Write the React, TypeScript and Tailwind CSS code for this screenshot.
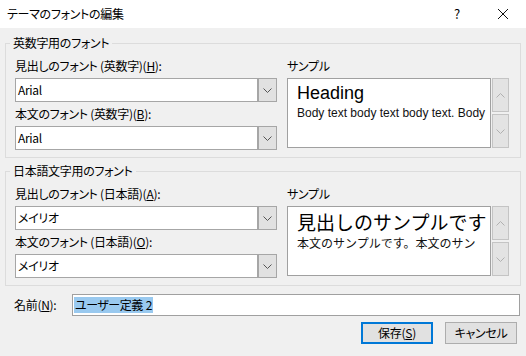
import React from "react";

const jp = "font-['Noto_Sans_CJK_JP','Noto_Sans',sans-serif]";

function Chevron({ up = false, color = "#555555" }: { up?: boolean; color?: string }) {
  return (
    <svg width="9" height="5" viewBox="0 0 9 5" fill="none">
      <polyline
        points={up ? "0.5,4.5 4.5,0.5 8.5,4.5" : "0.5,0.5 4.5,4.5 8.5,0.5"}
        stroke={color}
        strokeWidth="1"
      />
    </svg>
  );
}

function Combo({ value }: { value: string }) {
  return (
    <div className="flex h-[24px] border border-[#a6a6a6] bg-white">
      <div className="flex flex-1 items-center pl-[2px] text-[12px] text-black">{value}</div>
      <div className="flex w-[19px] items-center justify-center border-l-2 border-[#a6a6a6] bg-[#e1e1e1]">
        <Chevron />
      </div>
    </div>
  );
}

function Label({ text, accel, tail }: { text: string; accel: string; tail: string }) {
  return (
    <div className="mb-[4px] h-[16px] text-[12px] leading-[16px] text-black">
      {text}(<span className="underline">{accel}</span>){tail}
    </div>
  );
}

function ScrollButtons() {
  return (
    <div className="flex w-[17px] flex-col gap-[2px]">
      <div className="flex h-[34px] items-center justify-center border border-[#c4c4c4] bg-[#e3e3e3]">
        <Chevron up color="#b0b0b0" />
      </div>
      <div className="flex h-[34px] items-center justify-center border border-[#c4c4c4] bg-[#e3e3e3]">
        <Chevron color="#b0b0b0" />
      </div>
    </div>
  );
}

function Group({
  title,
  labels,
  combos,
  sample,
}: {
  title: string;
  labels: [string, string, string][];
  combos: string[];
  sample: React.ReactNode;
}) {
  return (
    <fieldset className="mx-[5px] min-w-0 border border-[#dcdcdc] p-0">
      <legend className="ml-[4px] px-[3px] text-[12px] leading-[16px] text-black">{title}</legend>
      <div className="flex gap-[10px] pb-[7px] pl-[9px] pr-[10px] pt-[7px]">
        <div className="flex w-[262px] flex-col">
          <Label text={labels[0][0]} accel={labels[0][1]} tail={labels[0][2]} />
          <Combo value={combos[0]} />
          <div className="mt-[4px]">
            <Label text={labels[1][0]} accel={labels[1][1]} tail={labels[1][2]} />
          </div>
          <Combo value={combos[1]} />
        </div>
        <div className="flex flex-col">
          <div className="mb-[4px] h-[16px] text-[12px] leading-[16px] text-black">サンプル</div>
          <div className="flex gap-[1px]">
            <div className="h-[70px] w-[204px] overflow-hidden whitespace-nowrap border border-[#a0a0a0] bg-white pl-[9px]">
              {sample}
            </div>
            <ScrollButtons />
          </div>
        </div>
      </div>
    </fieldset>
  );
}

export default function App() {
  return (
    <div className={`flex h-[356px] w-[526px] flex-col bg-[#f0f0f0] ${jp} [font-feature-settings:'palt'] tracking-[-0.3px]`}>
      {/* title bar */}
      <div className="flex h-[28px] shrink-0 items-center bg-white">
        <span className="flex-1 pl-[7px] text-[12px] text-black">テーマのフォントの編集</span>
        <div className="flex h-full w-[46px] items-center justify-center text-[13px] text-black">?</div>
        <div className="flex h-full w-[46px] items-center justify-center">
          <svg width="10" height="10" viewBox="0 0 10 10">
            <path d="M0 0 L10 10 M10 0 L0 10" stroke="#111" strokeWidth="1" />
          </svg>
        </div>
      </div>

      <div className="flex flex-col pt-[7px]">
        <Group
          title="英数字用のフォント"
          labels={[
            ["見出しのフォント (英数字)", "H", ":"],
            ["本文のフォント (英数字)", "B", ":"],
          ]}
          combos={["Arial", "Arial"]}
          sample={
            <div className="font-['Liberation_Sans',Arial,sans-serif] tracking-normal [font-feature-settings:normal]">
              <div className="pt-[4px] text-[18px] leading-[20px] text-black">Heading</div>
              <div className="mt-[3px] text-[12px] leading-[14px] text-[#111]">Body text body text body text. Body</div>
            </div>
          }
        />
        <div className="mt-[5px]">
          <Group
            title="日本語文字用のフォント"
            labels={[
              ["見出しのフォント (日本語)", "A", ":"],
              ["本文のフォント (日本語)", "O", ":"],
            ]}
            combos={["メイリオ", "メイリオ"]}
            sample={
              <div className="tracking-normal [font-feature-settings:normal]">
                <div className="pt-[3px] text-[19px] leading-[24px] text-black">見出しのサンプルです</div>
                <div className="mt-[2px] text-[12px] leading-[14px] text-[#111]">本文のサンプルです。本文のサン</div>
              </div>
            }
          />
        </div>

        {/* name row */}
        <div className="mt-[8px] flex items-center pl-[14px] pr-[6px]">
          <div className="w-[58px] text-[12px] text-black">
            名前(<span className="underline">N</span>):
          </div>
          <div className="flex h-[22px] flex-1 items-center border border-[#a0a0a0] bg-white pl-[1px]">
            <span className="whitespace-pre bg-[#99c9ef] px-[1px] text-[12px] leading-[16px] tracking-[-0.5px] text-black">
              ユーザー定義<span className="ml-[3px]">2</span>
            </span>
          </div>
        </div>

        {/* buttons */}
        <div className="mt-[6px] flex justify-end gap-[12px] pr-[9px]">
          <button className="flex h-[22px] w-[72px] items-center justify-center border-2 border-[#0078d7] bg-[#e1e1e1] text-[12px] text-black">
            保存(<span className="underline">S</span>)
          </button>
          <button className="flex h-[22px] w-[72px] items-center justify-center border border-[#adadad] bg-[#e1e1e1] text-[12px] text-black">
            キャンセル
          </button>
        </div>
      </div>
    </div>
  );
}
